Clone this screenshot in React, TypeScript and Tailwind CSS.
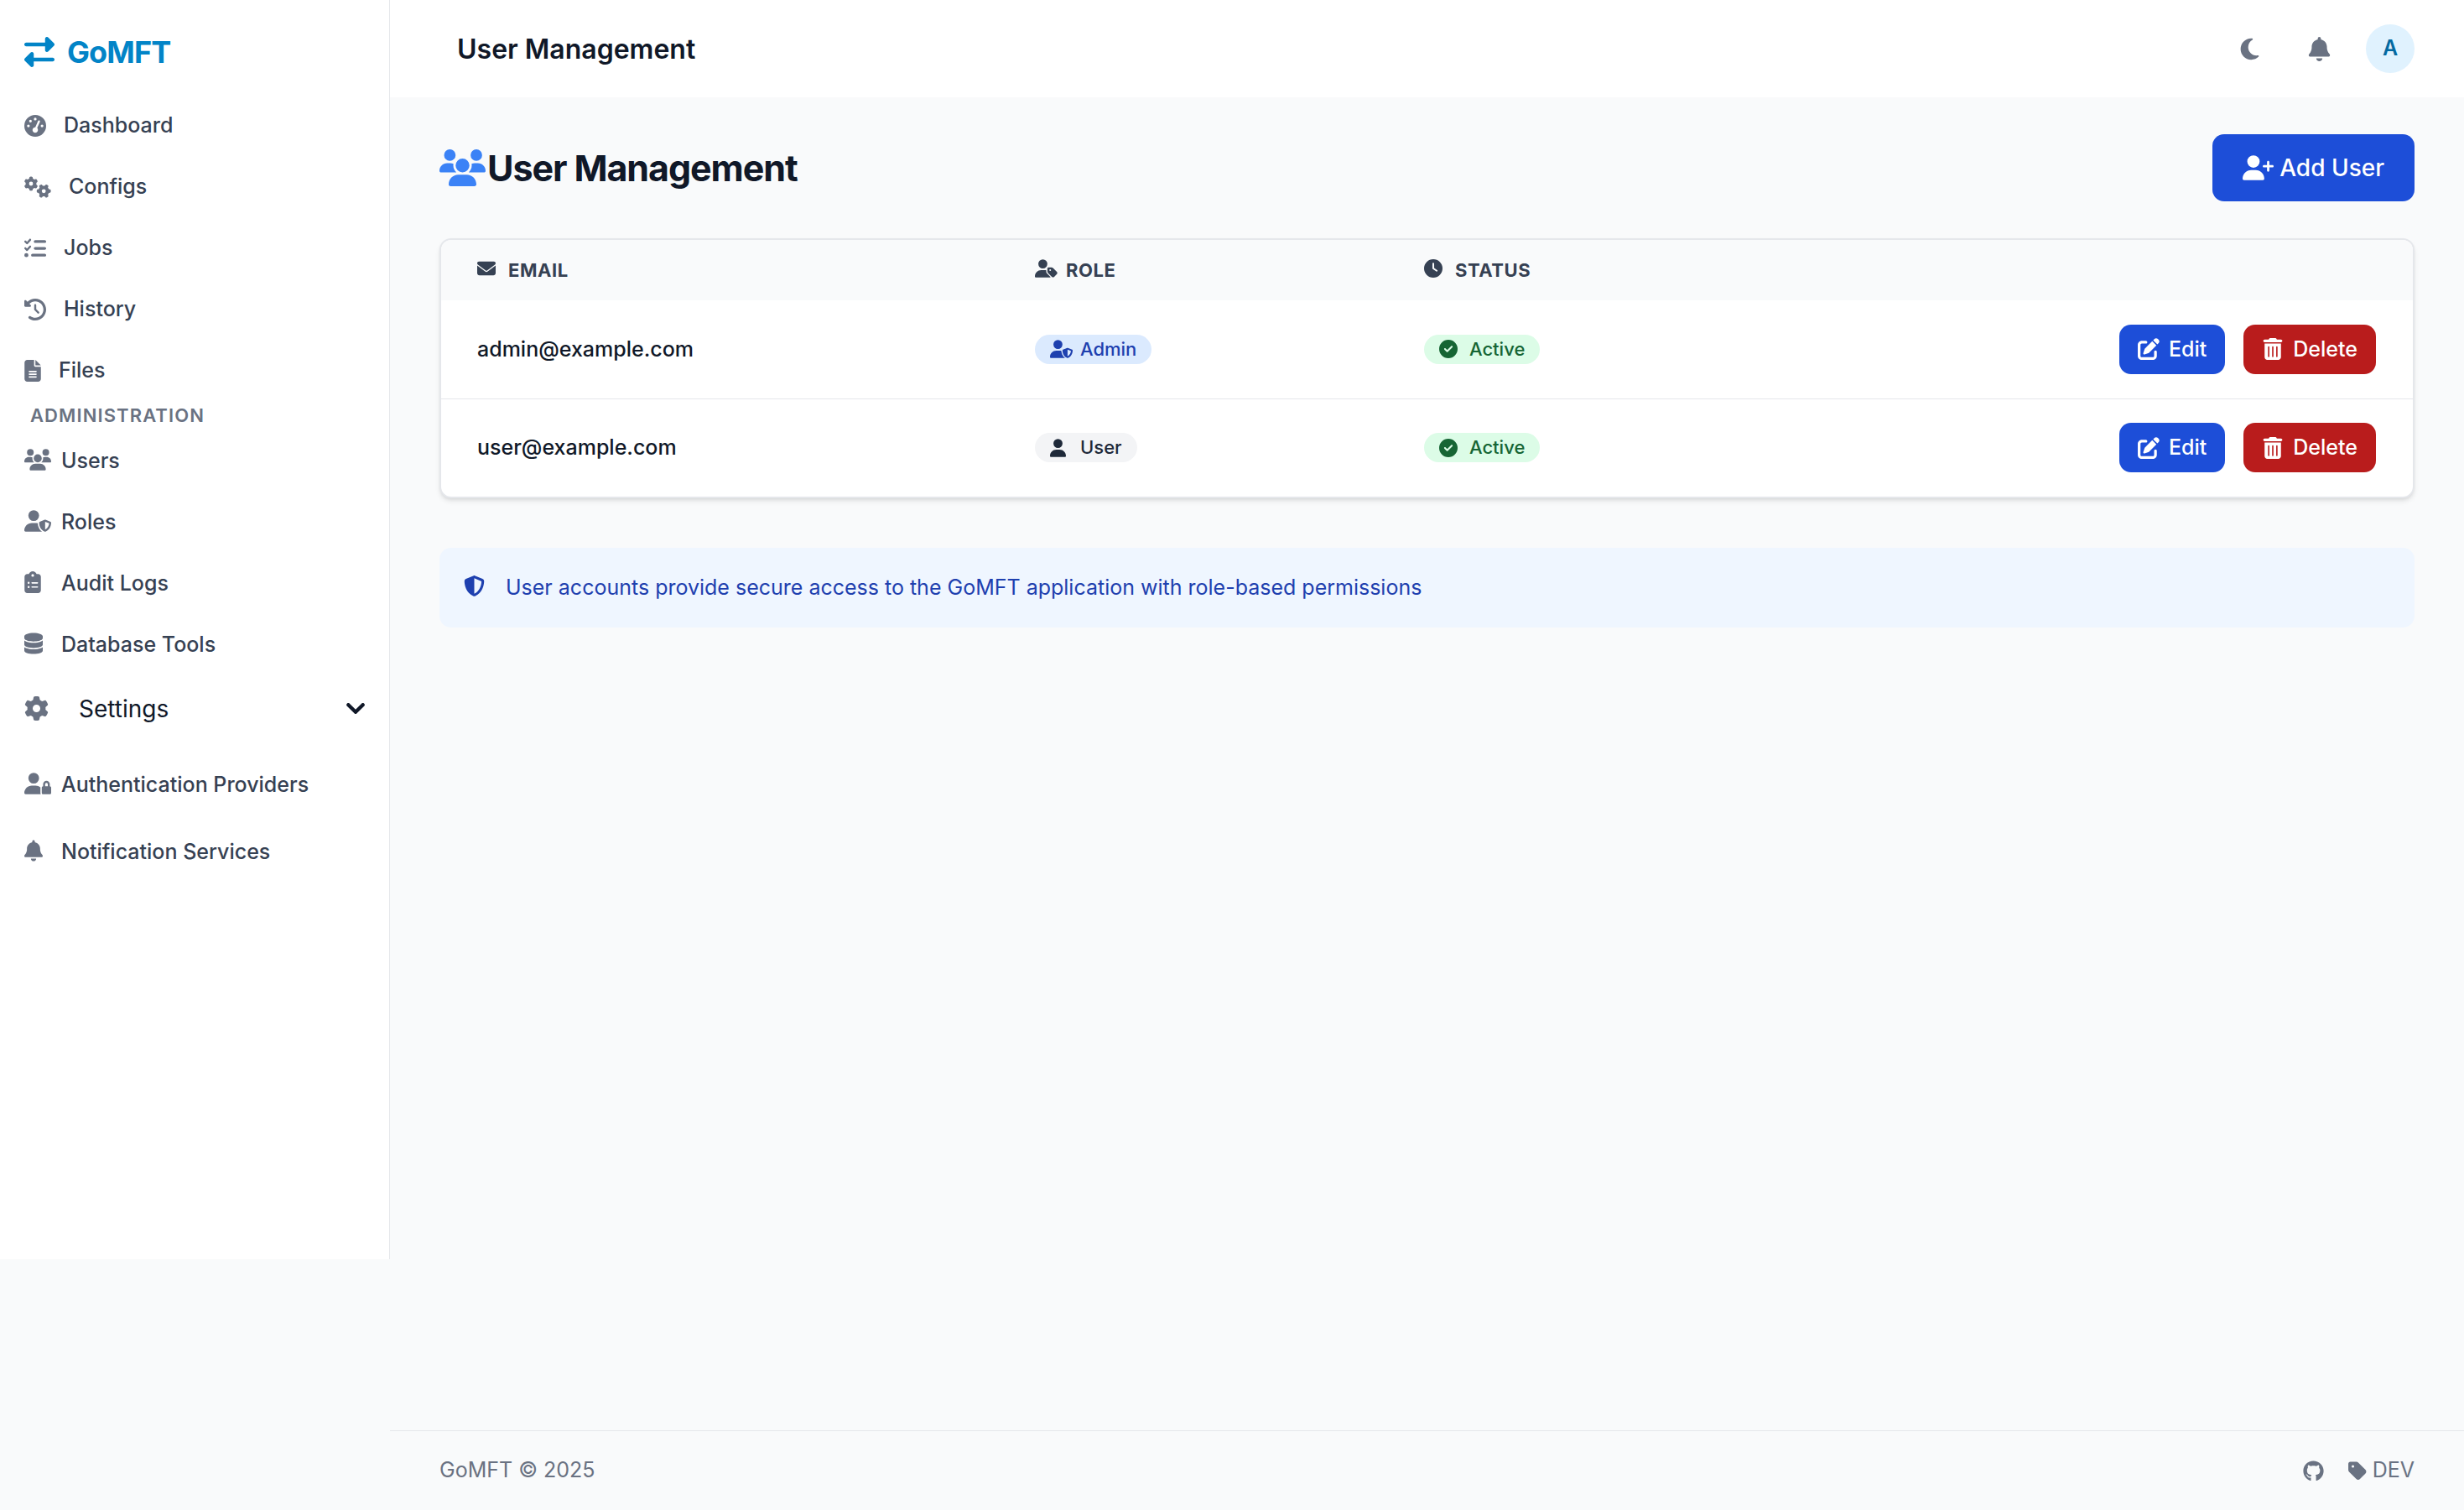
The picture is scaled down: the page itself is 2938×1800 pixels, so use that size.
import type { ReactNode } from "react";
import type { IconType } from "react-icons";
import {
  FaBell,
  FaCircleCheck,
  FaClipboardList,
  FaClock,
  FaClockRotateLeft,
  FaDatabase,
  FaEnvelope,
  FaFileLines,
  FaGaugeHigh,
  FaGear,
  FaGears,
  FaGithub,
  FaListCheck,
  FaMoon,
  FaPenToSquare,
  FaRightLeft,
  FaShieldHalved,
  FaTag,
  FaTrashCan,
  FaUser,
  FaUserLock,
  FaUserPlus,
  FaUserShield,
  FaUserTag,
  FaUsers,
} from "react-icons/fa6";

type NavItem = { label: string; icon: IconType; size: string };

const mainNav: NavItem[] = [
  { label: "Dashboard", icon: FaGaugeHigh, size: "w-[26px]" },
  { label: "Configs", icon: FaGears, size: "w-[32px]" },
  { label: "Jobs", icon: FaListCheck, size: "w-[26px]" },
  { label: "History", icon: FaClockRotateLeft, size: "w-[26px]" },
  { label: "Files", icon: FaFileLines, size: "w-[20px]" },
];

const adminNav: NavItem[] = [
  { label: "Users", icon: FaUsers, size: "w-[32px]" },
  { label: "Roles", icon: FaUserShield, size: "w-[32px]" },
  { label: "Audit Logs", icon: FaClipboardList, size: "w-[20px]" },
  { label: "Database Tools", icon: FaDatabase, size: "w-[22px]" },
];

const settingsNav: NavItem[] = [
  { label: "Authentication Providers", icon: FaUserLock, size: "w-[32px]" },
  { label: "Notification Services", icon: FaBell, size: "w-[22px]" },
];

const users = [
  { email: "admin@example.com", role: "Admin", status: "Active" },
  { email: "user@example.com", role: "User", status: "Active" },
];

const navLink = "flex h-[65px] items-center text-[25px] font-medium text-gray-700";

function IconSlotLink({ label, icon: Icon, size }: NavItem) {
  return (
    <a href="#" className={navLink}>
      <span className="mb-1 w-[44px] shrink-0">
        <Icon className={`h-[26px] text-gray-500 ${size}`} />
      </span>
      {label}
    </a>
  );
}

function Sidebar() {
  return (
    <aside className="h-[1501px] w-[465px] shrink-0 border-r border-gray-200 bg-white px-[29px] pt-[29px]">
      <a
        href="#"
        className="mb-[22px] flex h-[66px] items-center gap-[15px] text-[36px] font-bold tracking-tight text-[#0284c7]"
      >
        <FaRightLeft className="size-[36px]" />
        GoMFT
      </a>
      <nav>
        <ul className="flex flex-col gap-2">
          {mainNav.map(({ label, icon: Icon, size }) => (
            <li key={label}>
              <a href="#" className={navLink}>
                <Icon className={`mr-[21px] h-[26px] text-gray-500 ${size}`} />
                {label}
              </a>
            </li>
          ))}
        </ul>
        <h2 className="flex h-[43px] items-center px-[7px] text-[22px] font-semibold tracking-wider text-gray-500 uppercase">
          Administration
        </h2>
        <ul className="flex flex-col gap-2">
          {adminNav.map((item) => (
            <li key={item.label}>
              <IconSlotLink {...item} />
            </li>
          ))}
        </ul>
        <button type="button" className="flex h-[87px] w-full items-center text-[28px] text-gray-900">
          <FaGear className="size-[29px] text-gray-500" />
          <span className="ml-[36px] flex-1 text-left">Settings</span>
          <svg className="h-[13px] w-[22px]" viewBox="0 0 10 6" fill="none" aria-hidden="true">
            <path d="m1 1 4 4 4-4" stroke="currentColor" strokeWidth="2" strokeLinecap="round" strokeLinejoin="round" />
          </svg>
        </button>
        <ul className="mt-[15px] flex flex-col gap-[15px]">
          {settingsNav.map((item) => (
            <li key={item.label}>
              <IconSlotLink {...item} />
            </li>
          ))}
        </ul>
      </nav>
    </aside>
  );
}

function Header() {
  return (
    <header className="flex h-[116px] items-center justify-between bg-white px-[59px]">
      <p className="ml-[21px] pt-[2px] text-[32px] font-semibold text-gray-900">User Management</p>
      <div className="flex items-center gap-[29px] text-gray-500">
        <button type="button" aria-label="Toggle dark mode" className="flex h-[58px] w-[54px] items-center justify-center">
          <FaMoon className="size-[29px]" />
        </button>
        <button type="button" aria-label="Notifications" className="flex h-[58px] w-[54px] items-center justify-center">
          <FaBell className="size-[29px]" />
        </button>
        <button
          type="button"
          className="flex size-[58px] items-center justify-center rounded-full bg-[#e0f2fe] text-[25px] font-semibold text-[#0369a1]"
        >
          A
        </button>
      </div>
    </header>
  );
}

type HeadCellProps = { icon: IconType; size: string; width: string; children: ReactNode };

function HeadCell({ icon: Icon, size, width, children }: HeadCellProps) {
  return (
    <th scope="col" className={`px-[43px] text-left font-bold ${width}`}>
      <span className="flex items-center">
        <span className="mb-1 w-[37px] shrink-0">
          <Icon className={`h-[22px] ${size}`} />
        </span>
        {children}
      </span>
    </th>
  );
}

type BadgeProps = { icon: IconType; size: string; colors: string; children: ReactNode };

function Badge({ icon: Icon, size, colors, children }: BadgeProps) {
  return (
    <span className={`inline-flex h-[35px] items-center rounded-full px-[18px] text-[22px] font-medium ${colors}`}>
      <span className="w-[36px] shrink-0">
        <Icon className={`h-[22px] ${size}`} />
      </span>
      {children}
    </span>
  );
}

function ActionButton({ icon: Icon, color, children }: { icon: IconType; color: string; children: ReactNode }) {
  return (
    <button
      type="button"
      className={`flex h-[59px] items-center gap-[11px] rounded-[14px] px-[22px] text-[25px] font-medium text-white ${color}`}
    >
      <Icon className="size-[26px]" />
      {children}
    </button>
  );
}

function UserTable() {
  return (
    <div className="overflow-hidden rounded-[14px] border-2 border-gray-200 bg-white shadow-md">
      <table className="w-full border-collapse">
        <thead>
          <tr className="h-[72px] bg-gray-50 text-[22px] tracking-wide text-gray-700 uppercase">
            <HeadCell icon={FaEnvelope} size="w-[22px]" width="w-[665px]">
              Email
            </HeadCell>
            <HeadCell icon={FaUserTag} size="w-[27px]" width="w-[464px]">
              Role
            </HeadCell>
            <HeadCell icon={FaClock} size="w-[22px]" width="w-auto">
              Status
            </HeadCell>
            <th scope="col" aria-label="Actions" />
          </tr>
        </thead>
        <tbody className="divide-y divide-gray-200">
          {users.map((user) => (
            <tr key={user.email} className="h-[117px]">
              <td className="px-[43px] text-[25px] font-medium text-gray-900">{user.email}</td>
              <td className="px-[43px]">
                <div className="flex">
                  {user.role === "Admin" ? (
                    <Badge icon={FaUserShield} size="w-[27px]" colors="bg-[#dbeafe] text-[#1e40af]">
                      Admin
                    </Badge>
                  ) : (
                    <Badge icon={FaUser} size="w-[19px]" colors="bg-gray-100 text-gray-800">
                      User
                    </Badge>
                  )}
                </div>
              </td>
              <td className="px-[43px]">
                <div className="flex">
                  <Badge icon={FaCircleCheck} size="w-[22px]" colors="bg-[#dcfce7] text-[#166534]">
                    {user.status}
                  </Badge>
                </div>
              </td>
              <td className="px-[44px]">
                <div className="flex justify-end gap-[22px]">
                  <ActionButton icon={FaPenToSquare} color="bg-[#1d4ed8]">
                    Edit
                  </ActionButton>
                  <ActionButton icon={FaTrashCan} color="bg-[#b91c1c]">
                    Delete
                  </ActionButton>
                </div>
              </td>
            </tr>
          ))}
        </tbody>
      </table>
    </div>
  );
}

function Footer() {
  return (
    <footer className="flex h-[95px] items-center justify-between border-t border-gray-200 px-[59px] text-[25px] text-gray-500">
      <p>GoMFT © 2025</p>
      <div className="flex items-center">
        <a href="#" aria-label="GitHub">
          <FaGithub className="size-[25px]" />
        </a>
        <span className="ml-[29px] flex items-center gap-[7px]">
          <FaTag className="h-[25px] w-[22px]" />
          DEV
        </span>
      </div>
    </footer>
  );
}

export default function App() {
  return (
    <div className="flex min-h-screen bg-gray-50 font-[Inter,sans-serif] text-gray-900">
      <Sidebar />
      <div className="flex min-w-0 flex-1 flex-col">
        <Header />
        <main className="flex-1 px-[59px] pt-[44px]">
          <div className="mb-[44px] flex items-center justify-between">
            <h1 className="flex items-center gap-[2px] text-[43px] font-bold tracking-tight">
              <FaUsers className="h-[44px] w-[55px] text-[#3b82f6]" />
              User Management
            </h1>
            <button
              type="button"
              className="flex h-[80px] items-center gap-[7px] rounded-[14px] bg-[#1d4ed8] px-[36px] text-[28px] font-medium text-white"
            >
              <FaUserPlus className="h-[30px] w-[37px]" />
              Add User
            </button>
          </div>
          <UserTable />
          <div className="mt-[59px] flex h-[95px] items-center rounded-[14px] bg-[#eff6ff] px-[29px] text-[25px] text-[#1e40af]">
            <span className="mb-1 w-[50px] shrink-0">
              <FaShieldHalved className="size-[25px]" />
            </span>
            <p>User accounts provide secure access to the GoMFT application with role-based permissions</p>
          </div>
        </main>
        <Footer />
      </div>
    </div>
  );
}
